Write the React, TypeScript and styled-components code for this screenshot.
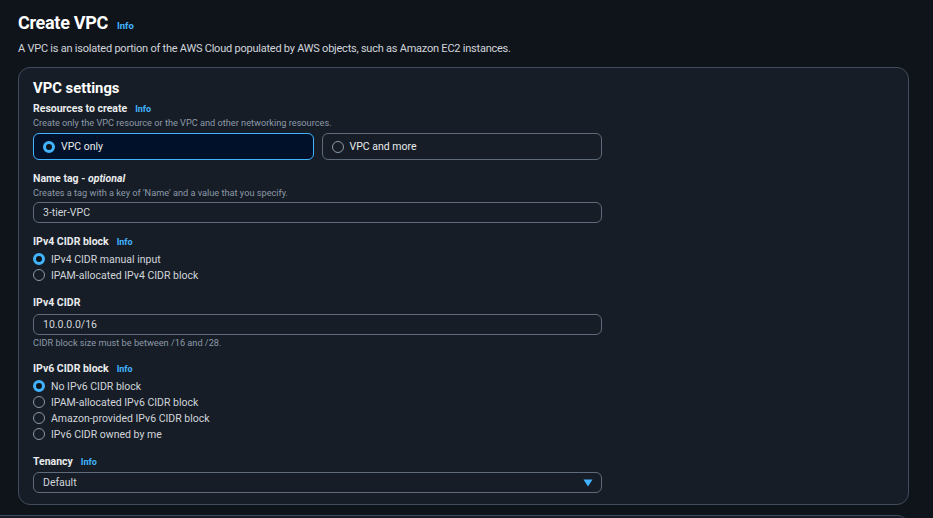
import React from "react";
import styled, { createGlobalStyle } from "styled-components";

const GlobalStyle = createGlobalStyle`
  html, body {
    margin: 0;
    padding: 0;
    background: #0f141a;
  }
  body {
    font-family: Roboto, "Noto Sans", sans-serif;
    color: #d1d5db;
  }
`;

const Page = styled.div`
  padding: 9px 18px 0 18px;
  width: 891px;
`;

const TitleRow = styled.div`
  display: flex;
  align-items: baseline;
  gap: 9px;
  height: 28px;
  line-height: 28px;
`;

const Title = styled.h1`
  margin: 0;
  font-size: 18px;
  font-weight: 700;
  color: #ffffff;
  letter-spacing: -0.3px;
`;

const Info = styled.span<{ $small?: boolean }>`
  font-size: ${(p) => (p.$small ? "9px" : "9.5px")};
  font-weight: 700;
  color: #42b4ff;
`;

const Lead = styled.p`
  margin: 4px 0 0 0;
  font-size: 11px;
  line-height: 16px;
  color: #d1d5db;
  letter-spacing: -0.23px;
`;

const Panel = styled.section`
  margin-top: 10px;
  border: 1px solid #414d5c;
  border-radius: 12px;
  background: #161d26;
  padding: 10px 14px 11px 14px;
`;

const PanelTitle = styled.h2`
  margin: 0 0 4px 0;
  font-size: 14.8px;
  line-height: 20px;
  font-weight: 700;
  color: #ffffff;
`;

const Form = styled.div`
  width: 569px;
  display: flex;
  flex-direction: column;
  gap: 12px;
`;

const Field = styled.div`
  display: flex;
  flex-direction: column;
`;

const Label = styled.div`
  display: flex;
  align-items: baseline;
  gap: 8px;
  font-size: 10.5px;
  line-height: 14px;
  font-weight: 700;
  color: #e9ebed;

  em {
    font-style: italic;
  }
`;

const Hint = styled.div<{ $gap?: number }>`
  margin-top: ${(p) => p.$gap ?? 0}px;
  font-size: 9.2px;
  line-height: 14px;
  color: #8d99a8;
`;

const Tiles = styled.div`
  margin-top: 3px;
  display: grid;
  grid-template-columns: 1fr 1fr;
  gap: 8px;
`;

const Tile = styled.div<{ $on?: boolean }>`
  height: 27px;
  box-sizing: border-box;
  display: flex;
  align-items: center;
  gap: 6px;
  padding: 0 9px;
  border-radius: 6px;
  border: ${(p) => (p.$on ? "1.5px solid #42b4ff" : "1px solid #5f6b7a")};
  background: ${(p) => (p.$on ? "#001129" : "transparent")};
  font-size: 10.5px;
  color: #e9ebed;
`;

const Dot = styled.span<{ $on?: boolean }>`
  flex: none;
  width: 12px;
  height: 12px;
  box-sizing: border-box;
  border-radius: 50%;
  border: ${(p) => (p.$on ? "3.5px solid #42b4ff" : "1px solid #8d99a8")};
  background: ${(p) => (p.$on ? "#0f141a" : "transparent")};
`;

const Options = styled.div`
  margin-top: 2px;
  padding-bottom: 1px;
  display: flex;
  flex-direction: column;
`;

const Option = styled.div`
  height: 16px;
  display: flex;
  align-items: center;
  gap: 6px;
  font-size: 10.5px;
  color: #d1d5db;
`;

const Input = styled.div<{ $gap?: number }>`
  margin-top: ${(p) => p.$gap ?? 2}px;
  height: 21px;
  box-sizing: border-box;
  border: 1px solid #5f6b7a;
  border-radius: 6px;
  padding: 0 9px;
  display: flex;
  align-items: center;
  justify-content: space-between;
  font-size: 10.5px;
  color: #d1d5db;
`;

const Caret = styled.svg`
  width: 10px;
  height: 8px;
  margin-right: -1px;
`;

const NextPanel = styled.div`
  margin-top: 10px;
  margin-left: -18px;
  height: 20px;
  border-top: 1px solid #414d5c;
  border-radius: 0 12px 0 0;
  background: #161d26;
`;

type Opt = { text: string; on?: boolean };

const RadioList = ({ items }: { items: Opt[] }) => (
  <Options>
    {items.map((o) => (
      <Option key={o.text}>
        <Dot $on={o.on} />
        {o.text}
      </Option>
    ))}
  </Options>
);

export default function App() {
  return (
    <>
      <GlobalStyle />
      <Page>
        <TitleRow>
          <Title>Create VPC</Title>
          <Info>Info</Info>
        </TitleRow>
        <Lead>
          A VPC is an isolated portion of the AWS Cloud populated by AWS objects, such as Amazon EC2 instances.
        </Lead>
        <Panel>
          <PanelTitle>VPC settings</PanelTitle>
          <Form>
            <Field>
              <Label>
                Resources to create <Info $small>Info</Info>
              </Label>
              <Hint>Create only the VPC resource or the VPC and other networking resources.</Hint>
              <Tiles>
                <Tile $on>
                  <Dot $on />
                  VPC only
                </Tile>
                <Tile>
                  <Dot />
                  VPC and more
                </Tile>
              </Tiles>
            </Field>

            <Field>
              <Label>
                <span>
                  Name tag - <em>optional</em>
                </span>
              </Label>
              <Hint>Creates a tag with a key of 'Name' and a value that you specify.</Hint>
              <Input>3-tier-VPC</Input>
            </Field>

            <Field>
              <Label>
                IPv4 CIDR block <Info $small>Info</Info>
              </Label>
              <RadioList
                items={[
                  { text: "IPv4 CIDR manual input", on: true },
                  { text: "IPAM-allocated IPv4 CIDR block" },
                ]}
              />
            </Field>

            <Field>
              <Label>IPv4 CIDR</Label>
              <Input $gap={4}>10.0.0.0/16</Input>
              <Hint $gap={1}>CIDR block size must be between /16 and /28.</Hint>
            </Field>

            <Field>
              <Label>
                IPv6 CIDR block <Info $small>Info</Info>
              </Label>
              <RadioList
                items={[
                  { text: "No IPv6 CIDR block", on: true },
                  { text: "IPAM-allocated IPv6 CIDR block" },
                  { text: "Amazon-provided IPv6 CIDR block" },
                  { text: "IPv6 CIDR owned by me" },
                ]}
              />
            </Field>

            <Field>
              <Label>
                Tenancy <Info $small>Info</Info>
              </Label>
              <Input $gap={3}>
                Default
                <Caret viewBox="0 0 10 8">
                  <path d="M0.5 0.5 H9.5 L5 7.5 Z" fill="#42b4ff" />
                </Caret>
              </Input>
            </Field>
          </Form>
        </Panel>
        <NextPanel />
      </Page>
    </>
  );
}
